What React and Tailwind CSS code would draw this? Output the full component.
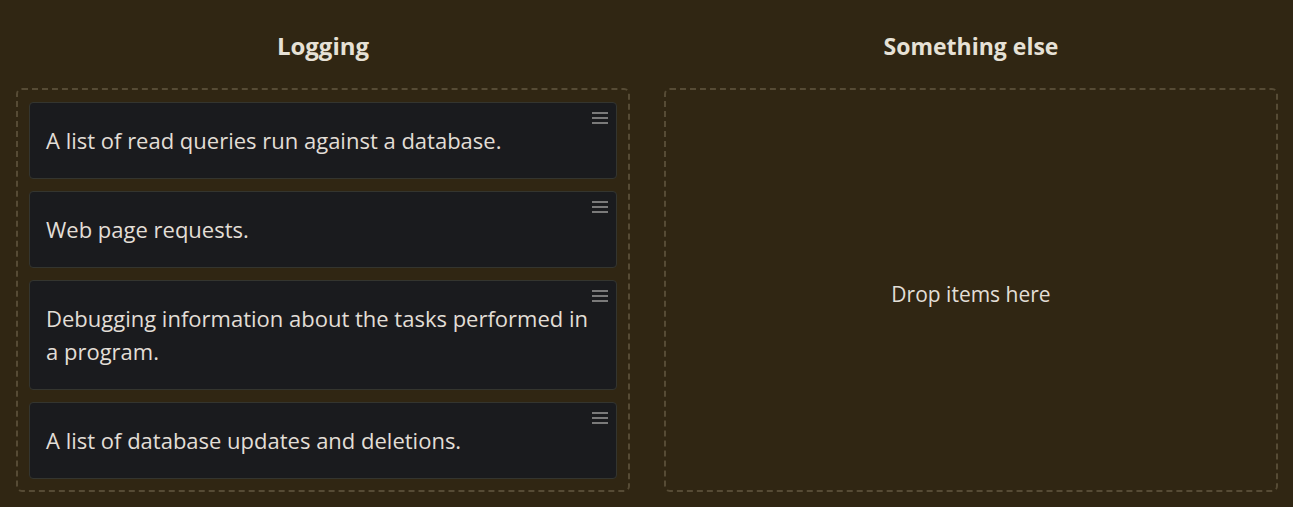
const items = [
  "A list of read queries run against a database.",
  "Web page requests.",
  "Debugging information about the tasks performed in a program.",
  "A list of database updates and deletions.",
];

function Handle() {
  return (
    <div className="absolute right-[8px] top-[9px] flex w-[16px] flex-col gap-[3px]">
      <span className="h-[2px] bg-[#7a7a7a]" />
      <span className="h-[2px] bg-[#7a7a7a]" />
      <span className="h-[2px] bg-[#7a7a7a]" />
    </div>
  );
}

function Card({ text }) {
  return (
    <div className="relative rounded-[4px] border border-[#34352f] bg-[#1a1b1e] py-[21px] pl-4 pr-[22px] text-[22px] font-medium leading-[33px] text-[#e2ded6]">
      {text}
      <Handle />
    </div>
  );
}

export default function App() {
  return (
    <div
      className="min-h-screen bg-[#302613] px-4 pr-[15px] pt-[26px]"
      style={{ fontFamily: "'Open Sans', 'Noto Sans', sans-serif" }}
    >
      <div className="grid grid-cols-2 gap-[34px]">
        <div className="flex flex-col">
          <h2 className="mb-[22px] flex h-[40px] items-center justify-center text-[24px] font-bold text-[#e6e1d6]">
            Logging
          </h2>
          <div className="flex flex-1 flex-col gap-3 rounded-[6px] border-2 border-dashed border-[#564b35] px-[11px] pb-[11px] pt-3">
            {items.map((t) => (
              <Card key={t} text={t} />
            ))}
          </div>
        </div>
        <div className="flex flex-col">
          <h2 className="mb-[22px] flex h-[40px] items-center justify-center text-[23px] font-bold text-[#e6e1d6]">
            Something else
          </h2>
          <div className="flex flex-1 items-center justify-center rounded-[6px] border-2 border-dashed border-[#564b35] pt-[10px] text-[21px] font-medium text-[#e2ded6]">
            Drop items here
          </div>
        </div>
      </div>
    </div>
  );
}
